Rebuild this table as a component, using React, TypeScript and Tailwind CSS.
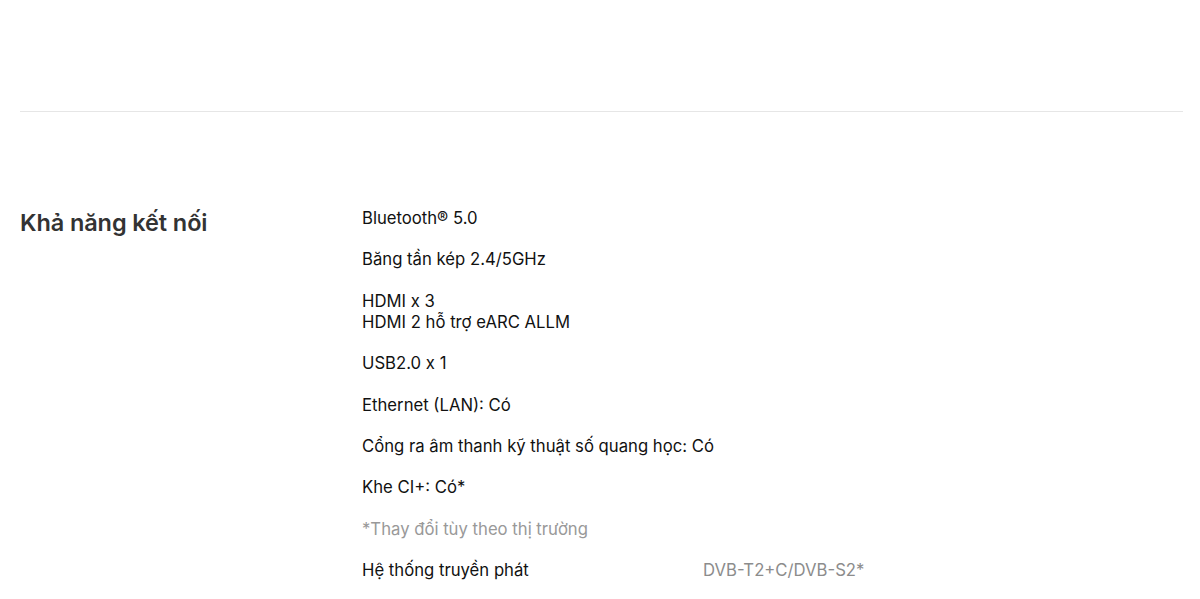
const items: string[][] = [
  ["Bluetooth® 5.0"],
  ["Băng tần kép 2.4/5GHz"],
  ["HDMI x 3", "HDMI 2 hỗ trợ eARC ALLM"],
  ["USB2.0 x 1"],
  ["Ethernet (LAN): Có"],
  ["Cổng ra âm thanh kỹ thuật số quang học: Có"],
  ["Khe CI+: Có*"],
];

export default function App() {
  return (
    <div className="min-h-screen bg-white px-5 font-['Inter','Noto_Sans',sans-serif]">
      <div className="h-[111px]" />
      <div className="h-px bg-[#e6e6e6] mr-[-3px]" />
      <div className="flex pt-[96px]">
        <h2 className="w-[342px] shrink-0 text-[23.5px] leading-[30px] font-semibold text-[#333] tracking-[-0.1px]">
          Khả năng kết nối
        </h2>
        <div className="flex flex-col gap-[20.4px] text-[16.7px] leading-[21px] text-[#111]">
          {items.map((lines, i) => (
            <div key={i}>
              {lines.map((l) => (
                <div key={l}>{l}</div>
              ))}
            </div>
          ))}
          <div className="text-[#999]">*Thay đổi tùy theo thị trường</div>
          <div className="flex">
            <div className="w-[341px]">Hệ thống truyền phát</div>
            <div className="text-[#8c8c8c]">DVB-T2+C/DVB-S2*</div>
          </div>
        </div>
      </div>
    </div>
  );
}
